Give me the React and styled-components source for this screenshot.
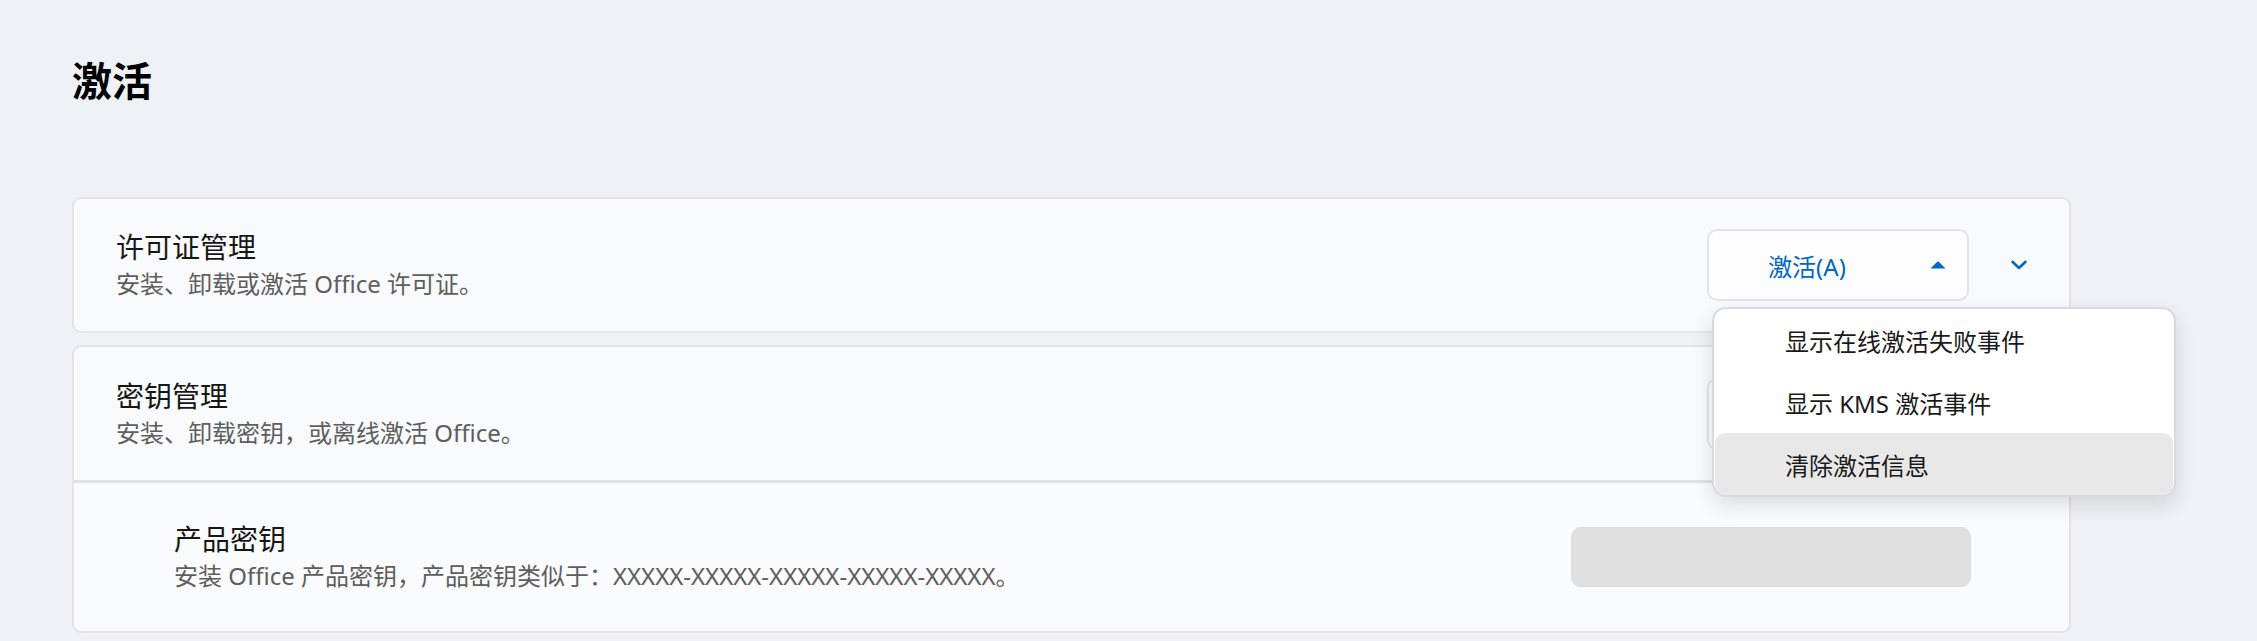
import React from "react";
import styled, { createGlobalStyle } from "styled-components";

const GlobalStyle = createGlobalStyle`
  html, body {
    margin: 0;
    padding: 0;
    background: #eef2f6;
  }
  body {
    font-family: "Noto Sans", "Noto Sans CJK SC", sans-serif;
    color: #1a1a1a;
  }
`;

const Page = styled.main`
  box-sizing: border-box;
  width: 2071px;
  padding: 55px 0 0 72px;
`;

const PageTitle = styled.h1`
  margin: 0 0 94px;
  font-family: "Noto Sans CJK SC", sans-serif;
  font-size: 40px;
  line-height: 48px;
  font-weight: 700;
  color: #000;
`;

const Stack = styled.div`
  display: flex;
  flex-direction: column;
  gap: 12px;
`;

const Card = styled.section`
  background: #f9fafb;
  border: 2px solid #e2e4e7;
  border-radius: 9px;
`;

const Header = styled.div`
  display: flex;
  align-items: center;
  height: ${(p) => p.$h}px;
  padding-left: 42px;
`;

const Content = styled.div`
  display: flex;
  align-items: center;
  height: 148px;
  padding: 0 98px 0 100px;
  border-top: 3px solid #dfe1e4;
  background: #fafbfc;
  border-radius: 0 0 8px 8px;
`;

const TextBlock = styled.div`
  flex: 1;
  min-width: 0;
`;

const Title = styled.div`
  font-size: 28px;
  line-height: 38px;
  color: #161616;
`;

const Sub = styled.div`
  font-size: 24px;
  line-height: 36px;
  color: #5e5e5e;
`;

const Anchor = styled.div`
  position: relative;
`;

const DropButton = styled.button`
  box-sizing: border-box;
  display: flex;
  align-items: center;
  width: 262px;
  height: 72px;
  padding: 0 21px 0 0;
  border: 2px solid #e3e4e6;
  border-radius: 10px;
  background: #fdfdfd;
  color: #0067c0;
  font-family: inherit;
  font-size: 24px;
  cursor: pointer;
`;

const ButtonLabel = styled.span`
  flex: 1;
  text-align: center;
`;

const Caret = styled.svg`
  flex: none;
  margin-left: 25px;
`;

const ChevronSlot = styled.div`
  width: 100px;
  display: flex;
  justify-content: center;
  align-items: center;
`;

const Menu = styled.div`
  position: absolute;
  z-index: 10;
  top: calc(100% + 6px);
  left: 5px;
  box-sizing: border-box;
  width: 464px;
  padding: 0 1px;
  background: #fff;
  border: 2px solid #d9dadc;
  border-radius: 14px;
  box-shadow: 0 8px 20px rgba(0, 0, 0, 0.12);
`;

const MenuItem = styled.div`
  display: flex;
  align-items: center;
  height: 62px;
  padding-left: 70px;
  border-radius: 10px;
  font-size: 24px;
  color: #1a1a1a;
  background: ${(p) => (p.$active ? "#e8e8e8" : "transparent")};
`;

const KeyInput = styled.div`
  box-sizing: border-box;
  width: 400px;
  height: 60px;
  border-radius: 10px;
  background: #e0e0e0;
  border: 1px solid #dcdcdc;
`;

const CaretUp = () => (
  <Caret width="16" height="8" viewBox="0 0 16 8">
    <path d="M0.5 7.5 L7 1 Q8 0 9 1 L15.5 7.5 Z" fill="#0067c0" />
  </Caret>
);

const Chevron = () => (
  <svg width="16" height="10" viewBox="0 0 16 10">
    <polyline
      points="1.5,1.8 8,8 14.5,1.8"
      fill="none"
      stroke="#0067c0"
      strokeWidth="2.6"
      strokeLinecap="round"
      strokeLinejoin="round"
    />
  </svg>
);

const menuItems = ["显示在线激活失败事件", "显示 KMS 激活事件", "清除激活信息"];

export default function App() {
  return (
    <>
      <GlobalStyle />
      <Page>
        <PageTitle>激活</PageTitle>
        <Stack>
          <Card>
            <Header $h={132}>
              <TextBlock>
                <Title>许可证管理</Title>
                <Sub>安装、卸载或激活 Office 许可证。</Sub>
              </TextBlock>
              <Anchor>
                <DropButton>
                  <ButtonLabel>激活(A)</ButtonLabel>
                  <CaretUp />
                </DropButton>
                <Menu>
                  {menuItems.map((t, i) => (
                    <MenuItem key={t} $active={i === 2}>
                      {t}
                    </MenuItem>
                  ))}
                </Menu>
              </Anchor>
              <ChevronSlot>
                <Chevron />
              </ChevronSlot>
            </Header>
          </Card>
          <Card>
            <Header $h={133}>
              <TextBlock>
                <Title>密钥管理</Title>
                <Sub>安装、卸载密钥，或离线激活 Office。</Sub>
              </TextBlock>
              <Anchor>
                <DropButton aria-label="密钥">
                  <ButtonLabel />
                  <CaretUp />
                </DropButton>
              </Anchor>
              <ChevronSlot>
                <Chevron />
              </ChevronSlot>
            </Header>
            <Content>
              <TextBlock>
                <Title>产品密钥</Title>
                <Sub>安装 Office 产品密钥，产品密钥类似于：XXXXX-XXXXX-XXXXX-XXXXX-XXXXX。</Sub>
              </TextBlock>
              <KeyInput />
            </Content>
          </Card>
        </Stack>
      </Page>
    </>
  );
}
